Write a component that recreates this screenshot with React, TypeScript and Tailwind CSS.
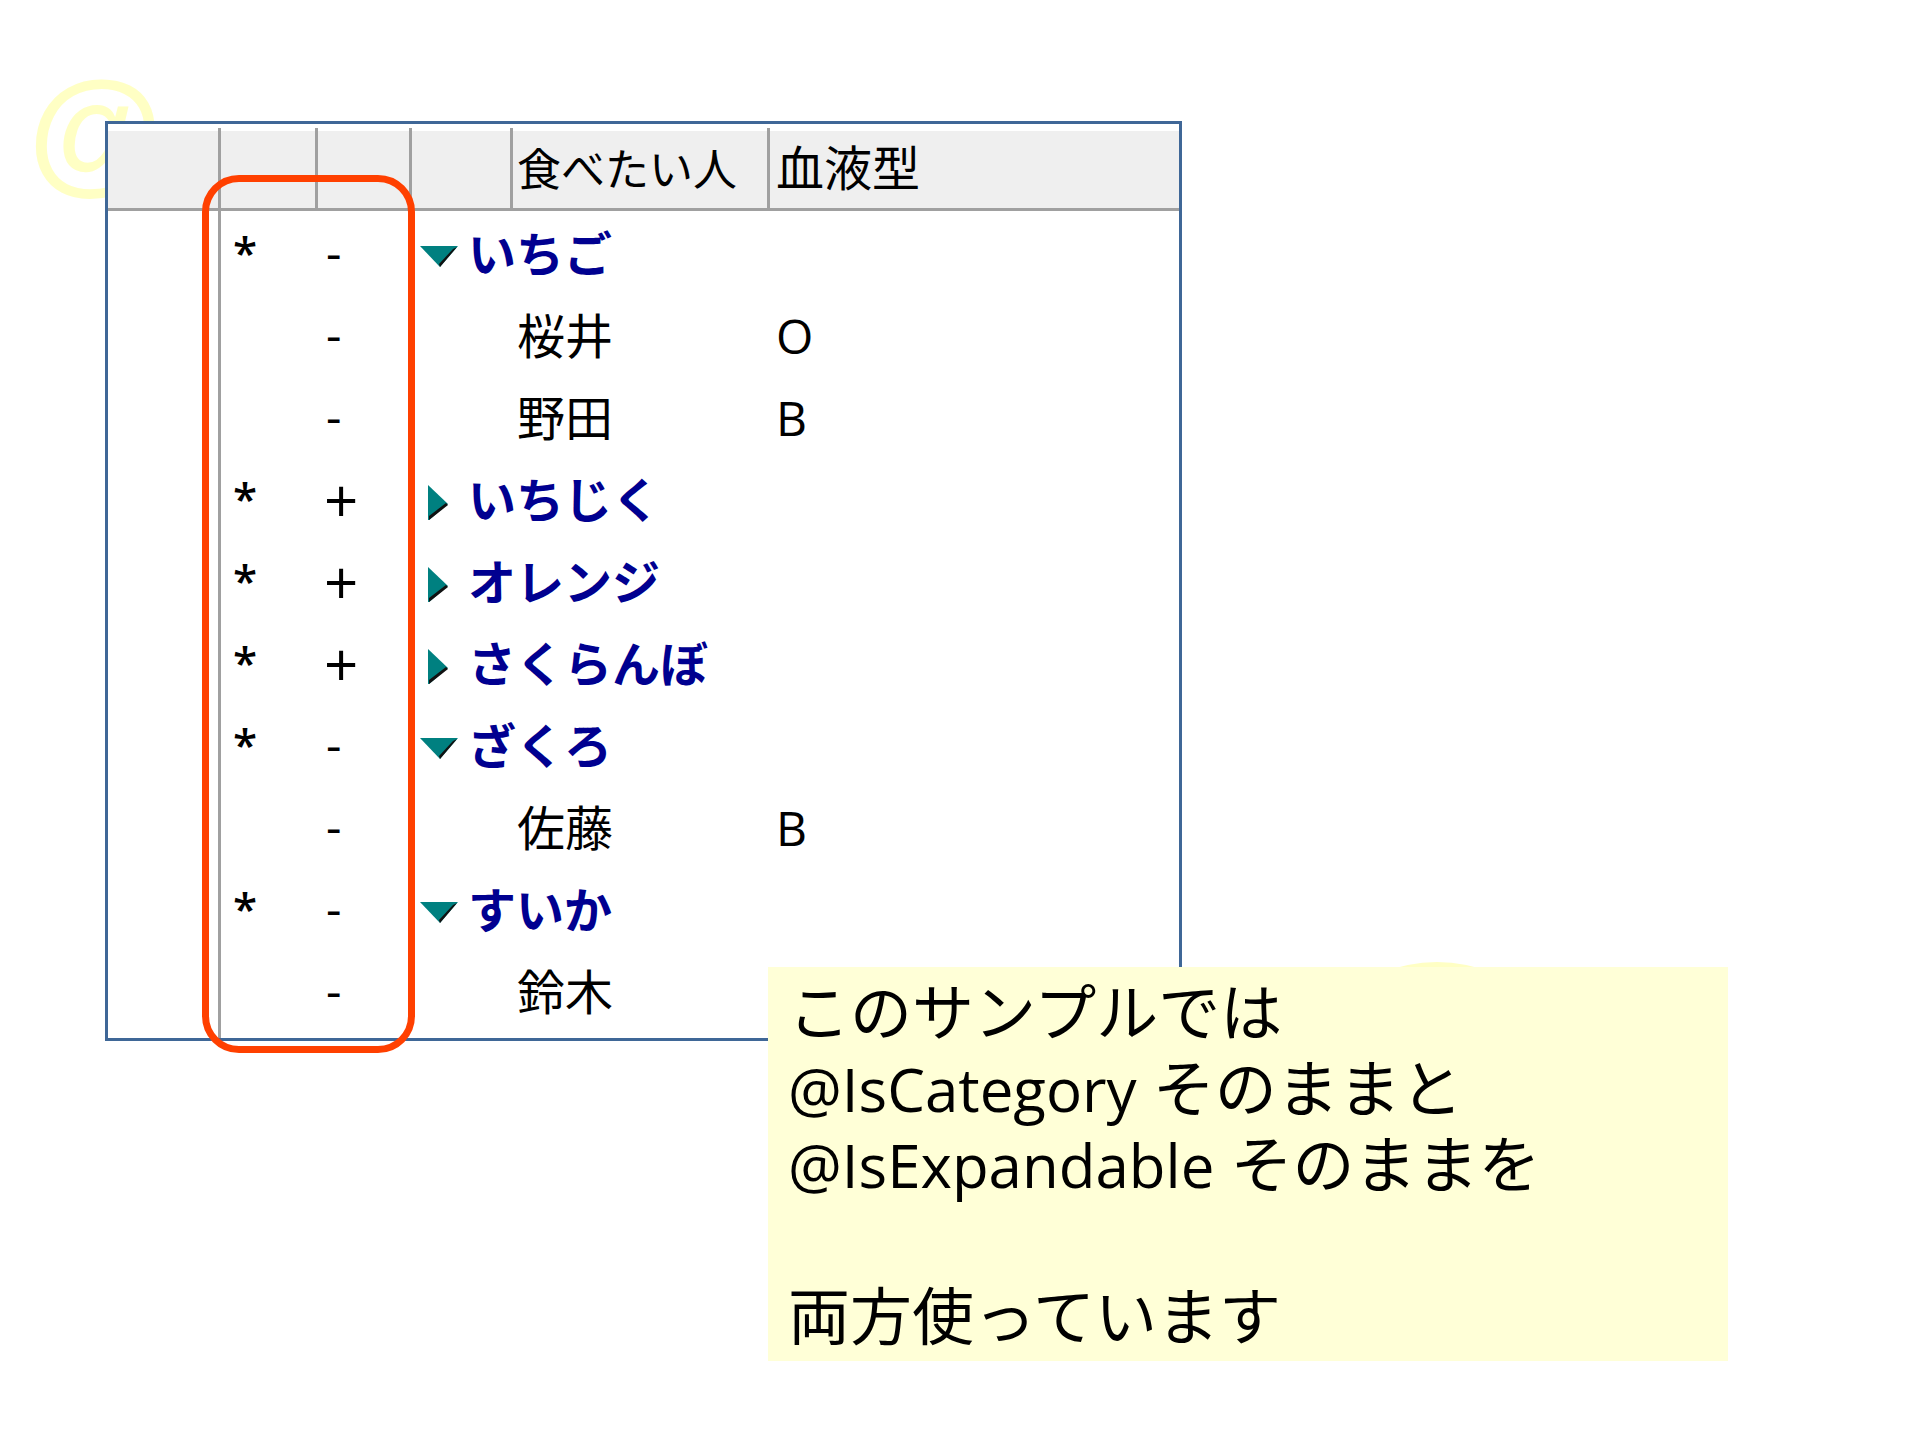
import React from "react";

type Category = { kind: "category"; name: string; expanded: boolean };
type Person = { kind: "person"; name: string; blood: string };
type Row = Category | Person;

const rows: Row[] = [
  { kind: "category", name: "いちご", expanded: true },
  { kind: "person", name: "桜井", blood: "O" },
  { kind: "person", name: "野田", blood: "B" },
  { kind: "category", name: "いちじく", expanded: false },
  { kind: "category", name: "オレンジ", expanded: false },
  { kind: "category", name: "さくらんぼ", expanded: false },
  { kind: "category", name: "ざくろ", expanded: true },
  { kind: "person", name: "佐藤", blood: "B" },
  { kind: "category", name: "すいか", expanded: true },
  { kind: "person", name: "鈴木", blood: "" },
];

function Twistie({ expanded }: { expanded: boolean }) {
  return (
    <svg viewBox="0 0 40 40" className="size-10 shrink-0" aria-hidden="true">
      {expanded ? (
        <>
          <path d="M0 12H38L20 33Z" fill="#008080" />
          <path d="M37 13L20 33L19 30L33 15Z" fill="#111" />
        </>
      ) : (
        <>
          <path d="M8 5V41L28 24Z" fill="#008080" />
          <path d="M9 40L28 25L26 23L9 36Z" fill="#111" />
        </>
      )}
    </svg>
  );
}

function HeaderCell({ children, last = false }: { children?: React.ReactNode; last?: boolean }) {
  return (
    <th
      scope="col"
      className={
        last
          ? "border-b-3 border-[#a0a0a0] p-0 pl-1.5 text-left font-normal"
          : "border-r-3 border-b-3 border-[#a0a0a0] p-0 pl-1 text-left font-normal"
      }
    >
      {children}
    </th>
  );
}

function DataRow({ row }: { row: Row }) {
  const category = row.kind === "category";
  return (
    <tr className="h-[82px]">
      <td className="border-r-3 border-[#a0a0a0] p-0" />
      <td className="p-0 pl-3 text-[44px] font-semibold">{category ? "*" : ""}</td>
      {category && !row.expanded ? (
        <td className="p-0 pt-1 pl-1.5 text-6xl leading-[60px]">+</td>
      ) : (
        <td className="p-0 pl-2">-</td>
      )}
      {row.kind === "category" ? (
        <td colSpan={3} className="p-0 pt-1 pl-2">
          <button type="button" aria-expanded={row.expanded} className="flex items-center gap-2 font-bold text-[#000090]">
            <Twistie expanded={row.expanded} />
            {row.name}
          </button>
        </td>
      ) : (
        <>
          <td className="p-0" />
          <td className="p-0 pt-1 pl-1">{row.name}</td>
          <td className="p-0 pt-1 pl-1.5">{row.blood}</td>
        </>
      )}
    </tr>
  );
}

function Latin({ children }: { children: React.ReactNode }) {
  return <span className="text-[60px] leading-none">{children}</span>;
}

export default function App() {
  return (
    <main className="relative isolate min-h-screen overflow-hidden bg-white pt-[121px] font-['Open_Sans','Noto_Sans_CJK_JP',sans-serif] text-black">
      <span
        aria-hidden="true"
        className="absolute top-[54px] left-[28px] -z-10 font-['Liberation_Sans',sans-serif] text-[138px] leading-[150px] font-bold text-[#ffffc4]"
      >
        @
      </span>

      <section className="relative ml-[105px] w-[calc(56%+2px)] border-3 border-[#3f6797] bg-white pt-1">
        <table className="w-full table-fixed border-separate border-spacing-0 text-5xl leading-[60px] whitespace-nowrap">
          <colgroup>
            <col className="w-[113px]" />
            <col className="w-[97px]" />
            <col className="w-[94px]" />
            <col className="w-[101px]" />
            <col className="w-[257px]" />
            <col />
          </colgroup>
          <thead>
            <tr className="h-[83px] bg-[linear-gradient(#ffffff_3px,#efefef_3px)]">
              <HeaderCell />
              <HeaderCell />
              <HeaderCell />
              <HeaderCell />
              <HeaderCell>
                <span className="text-[44px]">食べたい人</span>
              </HeaderCell>
              <HeaderCell last>血液型</HeaderCell>
            </tr>
          </thead>
          <tbody>
            {rows.map((row) => (
              <DataRow key={row.name} row={row} />
            ))}
            <tr className="h-[7px]" aria-hidden="true">
              <td className="border-r-3 border-[#a0a0a0] p-0" />
              <td colSpan={5} className="p-0" />
            </tr>
          </tbody>
        </table>
        <div className="pointer-events-none absolute top-[51px] -bottom-[15px] left-[94px] w-[213px] rounded-[37px] border-7 border-[#ff4000]" />
      </section>

      <aside className="relative -mt-[74px] ml-[40%] w-1/2">
        <div className="absolute -top-[5px] left-[519px] -z-10 size-[300px] rounded-full bg-[#ffffc4]" />
        <div className="bg-[#ffffd7] px-5 py-[7px] text-[62px] leading-[76px]">
          <p>このサンプルでは</p>
          <p>
            <Latin>@IsCategory</Latin> そのままと
          </p>
          <p>
            <Latin>@IsExpandable</Latin> そのままを
          </p>
          <p className="mt-[76px]">両方使っています</p>
        </div>
      </aside>
    </main>
  );
}
